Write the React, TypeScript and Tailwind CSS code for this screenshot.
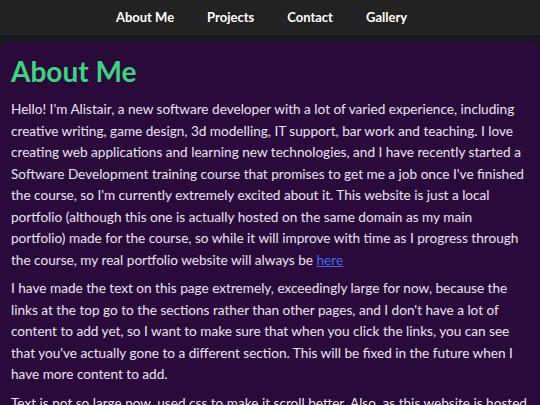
const NAV_LINKS = ["About Me", "Projects", "Contact", "Gallery"];

export default function App() {
  return (
    <div className="min-h-screen bg-[#18171e] font-['Lato',sans-serif] text-[#ece2f1]">
      <nav className="flex h-[35px] items-center justify-center gap-[33px] bg-[#222222] pr-[17px]">
        {NAV_LINKS.map((label) => (
          <a key={label} href="#" className="text-[13px] font-bold text-white">
            {label}
          </a>
        ))}
      </nav>

      <main className="mt-[7px] rounded-t-lg bg-[#2a0a3b] px-[11px] pt-[11px] pb-6">
        <h1 className="text-[28px] font-bold leading-[36px] text-[#3fd27f]">About Me</h1>

        <div className="mt-[10px] text-[13.6px] leading-[21.5px]">
          <p>
            Hello! I'm Alistair, a new software developer with a lot of varied experience, including
            creative writing, game design, 3d modelling, IT support, bar work and teaching. I love
            creating web applications and learning new technologies, and I have recently started a
            Software Development training course that promises to get me a job once I've finished
            the course, so I'm currently extremely excited about it. This website is just a local
            portfolio (although this one is actually hosted on the same domain as my main
            portfolio) made for the course, so while it will improve with time as I progress through
            the course, my real portfolio website will always be{" "}
            <a href="#" className="text-[#4468ee] underline">
              here
            </a>
          </p>
          <p className="mt-[7px]">
            I have made the text on this page extremely, exceedingly large for now, because the
            links at the top go to the sections rather than other pages, and I don't have a lot of
            content to add yet, so I want to make sure that when you click the links, you can see
            that you've actually gone to a different section. This will be fixed in the future when I
            have more content to add.
          </p>
          <p className="mt-[7px]">
            Text is not so large now, used css to make it scroll better. Also, as this website is hosted
            on the same domain as my main portfolio, some of the links may take you there instead.
          </p>
        </div>
      </main>
    </div>
  );
}
